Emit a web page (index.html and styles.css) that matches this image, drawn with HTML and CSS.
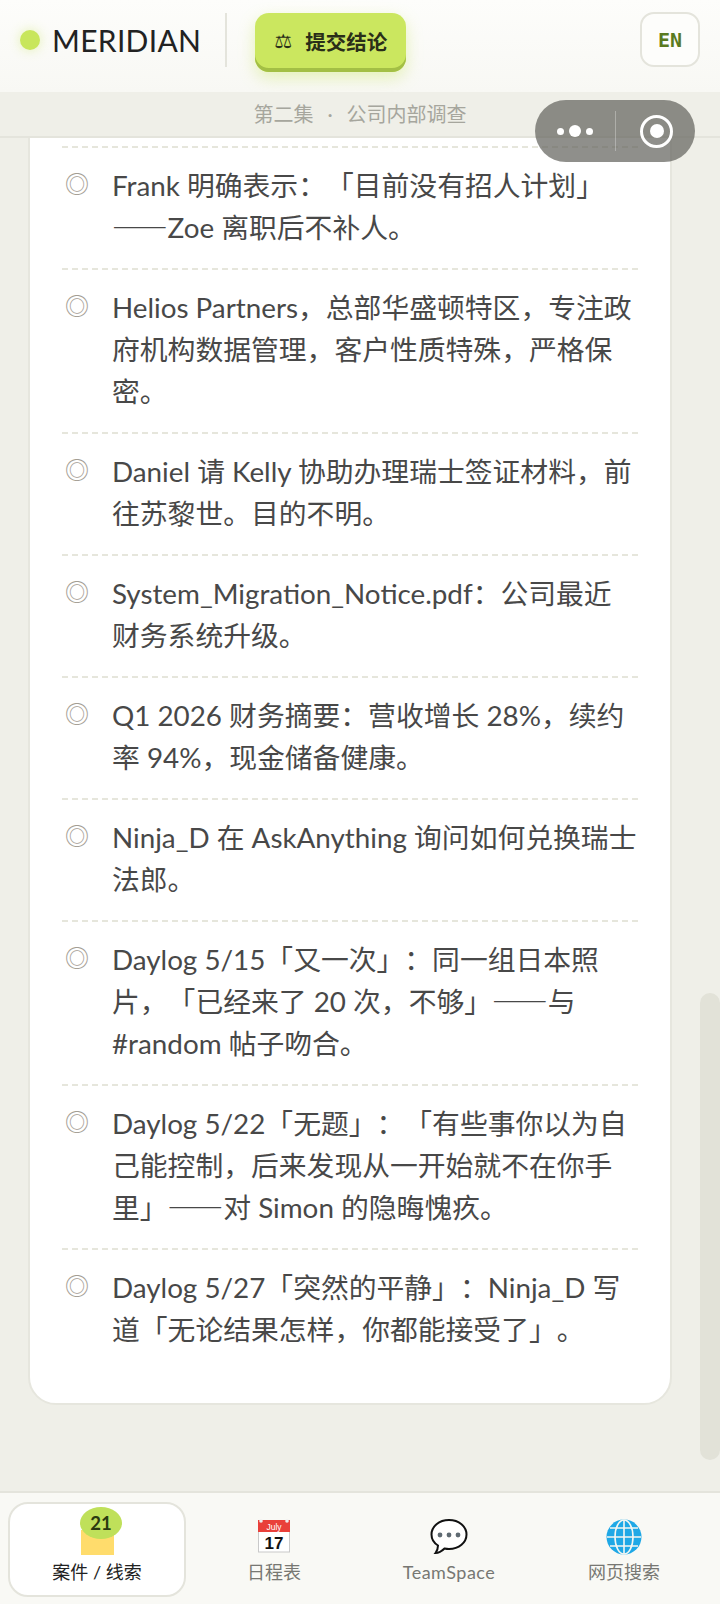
FILE: index.html
```html
<!DOCTYPE html>
<html lang="zh">
<head>
<meta charset="utf-8">
<title>Meridian</title>
<link rel="stylesheet" href="styles.css">
</head>
<body>
<div class="app">
  <header class="topbar">
    <div class="brand"><span class="brand-dot"></span><span class="brand-name">MERIDIAN</span></div>
    <span class="top-divider"></span>
    <button class="submit"><span class="scale">⚖</span><span>提交结论</span></button>
    <button class="lang">EN</button>
  </header>
  <div class="episode"><span>第二集</span><span class="sep">·</span><span>公司内部调查</span></div>
  <main class="scroller">
    <ul class="card">
      <li class="clue"><span class="bullet">◎</span><p>Frank 明确表示：「目前没有招人计划」<span class="cjk">——</span>Zoe 离职后不补人。</p></li>
      <li class="clue"><span class="bullet">◎</span><p>Helios Partners，总部华盛顿特区，专注政府机构数据管理，客户性质特殊，严格保密。</p></li>
      <li class="clue"><span class="bullet">◎</span><p>Daniel 请 Kelly 协助办理瑞士签证材料，前往苏黎世。目的不明。</p></li>
      <li class="clue"><span class="bullet">◎</span><p>System_Migration_Notice.pdf：公司最近财务系统升级。</p></li>
      <li class="clue"><span class="bullet">◎</span><p>Q1 2026 财务摘要：营收增长 28%，续约率 94%，现金储备健康。</p></li>
      <li class="clue"><span class="bullet">◎</span><p>Ninja_D 在 AskAnything 询问如何兑换瑞士法郎。</p></li>
      <li class="clue"><span class="bullet">◎</span><p>Daylog 5/15「又一次」：同一组日本照片，「已经来了 20 次，不够」<span class="cjk">——</span>与 #random 帖子吻合。</p></li>
      <li class="clue"><span class="bullet">◎</span><p>Daylog 5/22「无题」：「有些事你以为自己能控制，后来发现从一开始就不在你手里」<span class="cjk">——</span>对 Simon 的隐晦愧疚。</p></li>
      <li class="clue"><span class="bullet">◎</span><p>Daylog 5/27「突然的平静」：Ninja_D 写道「无论结果怎样，你都能接受了」。</p></li>
    </ul>
    <div class="scrollbar"></div>
  </main>
  <nav class="tabs">
    <a class="tab active">
      <span class="icon folder"><span class="folder-body"></span><span class="badge">21</span></span>
      <span class="tab-label">案件 / 线索</span>
    </a>
    <a class="tab">
      <span class="icon">
        <svg class="glyph" viewBox="0 0 36 36"><rect x="2.500" y="1.500" width="31" height="31.500" fill="#fff" stroke="#c9c9c9"/><rect x="2" y="1" width="32" height="12" fill="#e9403a"/><circle cx="5" cy="2" r="1.800" fill="#eee"/><circle cx="31" cy="2" r="1.800" fill="#eee"/><text x="18" y="10.500" class="cal-month">July</text><text x="18" y="29.500" class="cal-day">17</text></svg>
      </span>
      <span class="tab-label">日程表</span>
    </a>
    <a class="tab">
      <span class="icon">
        <svg class="glyph wide" viewBox="0 0 38 36"><path d="M19 1C9 1 1.500 7.500 1.500 15.500c0 4.500 2.500 8.500 6.500 11 0 3-1 5.500-2.500 7.500 3.500 0 7-2.500 9-4.500 1.500.3 3 .5 4.500.5 10 0 17.500-6.500 17.500-14.500S29 1 19 1z" fill="#fff" stroke="#111" stroke-width="2"/><circle cx="10" cy="16" r="2.400" fill="#5f6a72"/><circle cx="19" cy="16" r="2.400" fill="#5f6a72"/><circle cx="28" cy="16" r="2.400" fill="#5f6a72"/></svg>
      </span>
      <span class="tab-label latin">TeamSpace</span>
    </a>
    <a class="tab">
      <span class="icon">
        <svg class="glyph" viewBox="0 0 36 36"><circle cx="18" cy="18" r="17.500" fill="#1fa8e6"/><g fill="none" stroke="#f4f6f2" stroke-width="1.600"><ellipse cx="18" cy="18" rx="9" ry="17"/><path d="M18 1v34M1 18h34M4 9h28M4 27h28"/></g></svg>
      </span>
      <span class="tab-label">网页搜索</span>
    </a>
  </nav>
  <div class="capsule">
    <span class="more"><i class="d"></i><i class="d big"></i><i class="d"></i></span>
    <span class="capsule-line"></span>
    <span class="target"><i></i></span>
  </div>
</div>
</body>
</html>
```
FILE: styles.css
```css
* { box-sizing: border-box; }
html, body { margin: 0; padding: 0; }
body {
  font-family: "Lato", "Noto Sans CJK SC", sans-serif;
  background: #efefe8;
  text-spacing-trim: space-all;
}
.app {
  position: relative;
  width: 720px;
  height: 1604px;
  display: flex;
  flex-direction: column;
  overflow: hidden;
}
.topbar {
  height: 92px;
  flex: none;
  display: flex;
  align-items: flex-start;
  padding: 13px 20px 0 20px;
  background: linear-gradient(180deg, #fdfdfb, #f8f8f4);
}
.brand { display: flex; align-items: center; height: 54px; }
.brand-dot {
  width: 20px;
  height: 20px;
  border-radius: 50%;
  background: #c8e65c;
  box-shadow: 0 0 12px rgba(200, 230, 92, .45);
}
.brand-name {
  margin-left: 12px;
  font-size: 30px;
  color: #222;
  letter-spacing: .3px;
}
.top-divider {
  width: 2px;
  height: 54px;
  margin-left: 24px;
  background: #e4e4dc;
}
.submit {
  margin-left: 28px;
  width: 151px;
  height: 59px;
  border: 0;
  border-radius: 14px;
  background: #cbe75f;
  box-shadow: inset 0 -4px 0 #a3bf45, 0 6px 16px rgba(200, 230, 92, .4);
  display: flex;
  align-items: center;
  justify-content: center;
  gap: 13px;
  padding: 0 0 3px;
  font-family: inherit;
  font-size: 20.500px;
  font-weight: 700;
  color: #2a2e18;
}
.scale { font-family: "DejaVu Sans", sans-serif; font-size: 20px; font-weight: 400; }
.lang {
  margin-left: auto;
  width: 60px;
  height: 55px;
  margin-top: -1px;
  border: 2px solid #e4e4dc;
  border-radius: 14px;
  background: #fdfdfb;
  font-family: "DejaVu Sans Mono", monospace;
  font-size: 20px;
  font-weight: 700;
  color: #5a7a20;
  padding: 0;
}
.episode {
  height: 46px;
  flex: none;
  display: flex;
  align-items: center;
  justify-content: center;
  gap: 14px;
  padding-bottom: 2px;
  background: #efefe8;
  border-bottom: 2px solid #e4e4dc;
  font-size: 20px;
  color: #a6a69d;
}
.scroller {
  position: relative;
  flex: 1;
  min-height: 0;
  overflow: hidden;
}
.card {
  list-style: none;
  margin: -24px 48px 0 28px;
  padding: 0 32px 33px;
  background: #fff;
  border: 2px solid #e6e6de;
  border-radius: 0 0 28px 28px;
}
.clue {
  display: flex;
  padding: 17px 0 19px;
  border-top: 2px dashed #e6e6dc;
}
.clue:first-child { margin-top: 30px; }
.bullet {
  flex: none;
  width: 50px;
  padding-left: 3px;
  font-family: "Noto Sans CJK SC", sans-serif;
  font-size: 24px;
  line-height: 36px;
  color: #a39d93;
}
.clue p {
  margin: 0;
  padding-right: 1px;
  font-size: 27.800px;
  line-height: 42px;
  color: #484848;
}
.cjk { font-family: "Noto Sans CJK SC", sans-serif; line-height: 1; }
.scrollbar {
  position: absolute;
  right: 0;
  top: 855px;
  width: 20px;
  height: 467px;
  border-radius: 10px;
  background: #e2e2d8;
}
.tabs {
  height: 113px;
  flex: none;
  display: grid;
  grid-template-columns: 178px 176px 174px 1fr;
  padding: 9px 8px 7px 8px;
  background: #f9f9f5;
  border-top: 2px solid #e4e4dc;
}
.tab {
  display: flex;
  flex-direction: column;
  align-items: center;
  padding-top: 15px;
  border: 2px solid transparent;
  border-radius: 20px;
  color: #777772;
  font-size: 18px;
}
.tab.active {
  background: #fff;
  border-color: #e4e4dc;
  color: #222;
}
.icon { position: relative; height: 36px; display: block; }
.glyph { display: block; width: 36px; height: 36px; }
.glyph.wide { width: 38px; }
.folder { width: 36px; }
.folder-body {
  position: absolute;
  left: 2px;
  top: 11px;
  width: 33px;
  height: 25px;
  background: #ffdc6c;
}
.badge {
  position: absolute;
  left: 1px;
  top: -12px;
  width: 42px;
  height: 32px;
  border-radius: 50%;
  background: #bfe05a;
  color: #2a3a10;
  font-size: 18.500px;
  font-weight: 700;
  line-height: 32px;
  text-align: center;
}
.tab-label { margin-top: 5px; line-height: 24px; }
.tab-label.latin { letter-spacing: .5px; }
.cal-month { font: 8.500px "Liberation Sans", sans-serif; fill: #fff; text-anchor: middle; }
.cal-day { font: 700 17px "Liberation Sans", sans-serif; fill: #111; text-anchor: middle; }
.capsule {
  position: absolute;
  left: 535px;
  top: 100px;
  width: 160px;
  height: 62px;
  border-radius: 31px;
  background: rgba(100, 100, 94, .72);
  display: flex;
  align-items: center;
}
.more { margin-left: 22px; width: 36px; display: flex; align-items: center; justify-content: space-between; }
.d { width: 7px; height: 7px; border-radius: 50%; background: #fff; }
.d.big { width: 12px; height: 12px; }
.capsule-line { margin-left: 22px; width: 1px; height: 40px; background: rgba(255,255,255,.3); }
.target {
  margin-left: 24px;
  width: 33px;
  height: 33px;
  border: 3px solid #fff;
  border-radius: 50%;
  display: flex;
  align-items: center;
  justify-content: center;
}
.target i { width: 14px; height: 14px; border-radius: 50%; background: #fff; }
```
